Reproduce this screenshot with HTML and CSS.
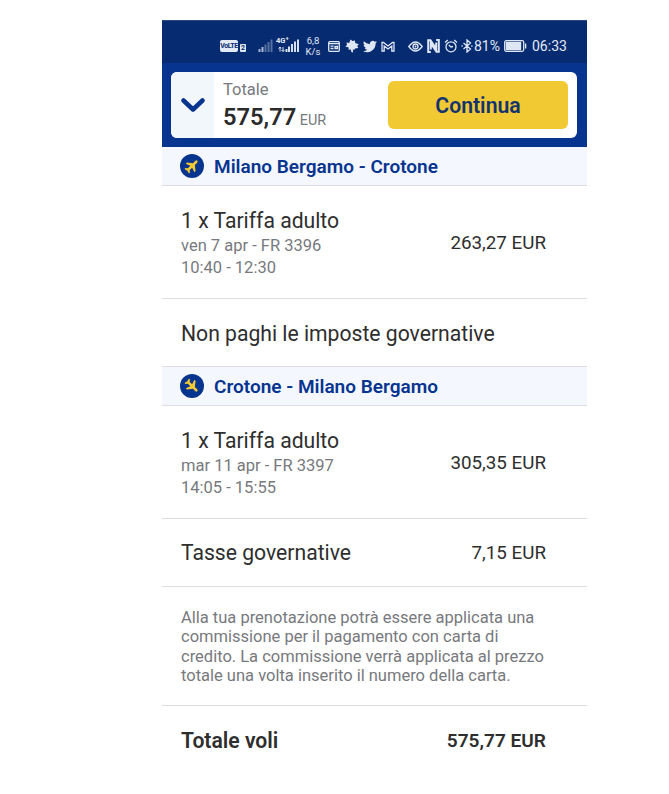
FILE: index.html
```html
<!DOCTYPE html>
<html lang="it">
<head>
<meta charset="utf-8">
<title>Riepilogo prenotazione</title>
<link rel="stylesheet" href="styles.css">
</head>
<body>
<main class="phone">
  <div class="status">
    <span class="volte">VoLTE</span>
    <span class="sim">2</span>
    <svg class="signal" width="15" height="14" viewBox="0 0 15 14"><path class="mid" d="M1.5 10v3M4.5 8v5"/><path class="dim" d="M7.5 5.500v7.500M10.500 3v10M13.500 .5v12.500"/></svg>
    <span class="network">
      <small>4G<sup>+</sup></small>
      <svg width="23" height="14" viewBox="0 0 23 14"><path class="thin" d="M4 12.500V8M2.500 9.500 4 8l1 1.500M7 8v4.500M5.500 11 7 12.500 8.500 11"/><path class="bar" d="M10.500 10v3M13 7.500v5.500M16 5v8M19 2.500v10.500M22 .5v12.500"/></svg>
    </span>
    <span class="speed">6,8<br>K/s</span>
    <svg class="news" width="12" height="11" viewBox="0 0 12 11"><rect x=".7" y=".7" width="10.600" height="9.600" rx="1"/><path d="M1 2.700h10M2.500 5.200h3M2.500 7.500h3M7 5.500h2.500v2H7z"/></svg>
    <svg class="leaf" width="14" height="14" viewBox="0 0 14 14"><path class="fill" d="M5.500.5 7.500 2 10 1.500l.2 2.500 3.600 1.200-1.600 1.800 1.100 2-3.300.5-.5 1.200-1.700-.2.400 3-1.800-.5-.6-2.500-2.300.3.200-2.300L.3 7.500l1.700-1.500L1.500 3.500l2.700.5z"/></svg>
    <svg class="bird" width="14" height="13" viewBox="0 0 24 20"><path class="fill" d="M24 2.400a10 10 0 0 1-2.800.8A5 5 0 0 0 23.300.5a10 10 0 0 1-3.100 1.200A5 5 0 0 0 11.800 6.200 14 14 0 0 1 1.700 1a5 5 0 0 0 1.500 6.600A5 5 0 0 1 1 7a5 5 0 0 0 3.900 4.900 5 5 0 0 1-2.200.1 5 5 0 0 0 4.600 3.400A10 10 0 0 1 0 17.500 14 14 0 0 0 21.500 5z"/></svg>
    <svg class="mail" width="14" height="11" viewBox="0 0 14 11"><path d="M1 10V1.500h1.500L7 5l4.500-3.500H13V10h-2.200V5L7 8 3.200 5v5z"/></svg>
    <svg class="eye" width="15" height="11" viewBox="0 0 15 11"><path d="M.8 5.500Q7.500-3.500 14.200 5.500 7.500 14.500.8 5.500z"/><circle cx="7.500" cy="5.500" r="2.500"/><circle class="fill" cx="7.500" cy="5.500" r="1"/></svg>
    <svg class="nfc" width="13" height="14" viewBox="0 0 13 14"><path d="M3.800 13H1.200V1.200h2.300l5.700 8.500V3.500M9.200 1h2.600v11.800H9.500L3.800 4.300v6.200"/></svg>
    <svg class="alarm" width="14" height="14" viewBox="0 0 14 14"><circle cx="7" cy="7.800" r="5"/><path d="M1 3.500 3.800 1M13 3.500 10.200 1M4.800 6 7 8l2-.5"/></svg>
    <svg class="bluetooth" width="12" height="14" viewBox="0 0 12 14"><path d="m2.500 4 7 6L6 13V1l3.500 3-7 6M.5 7h1.200M10.300 7h1.200"/></svg>
    <span class="percent">81%</span>
    <svg class="battery" width="23" height="12" viewBox="0 0 23 12"><rect x=".7" y=".7" width="19" height="10.600" rx="1.500"/><path class="fill" d="M1.800 1.800h15.400v8.400H1.800zM21 3.500h1.300v5H21z"/></svg>
    <time>06:33</time>
  </div>

  <header class="header">
    <div class="summary">
      <div class="toggle"><svg width="24" height="16" viewBox="0 0 24 16"><path d="m2.500 3.500 9.500 9 9.500-9"/></svg></div>
      <div class="total">
        <span class="total-label">Totale</span>
        <span class="total-value"><b>575,77</b> <span>EUR</span></span>
      </div>
      <button class="continue">Continua</button>
    </div>
  </header>

  <h2 class="route">
    <svg class="plane" width="24" height="24" viewBox="0 0 24 24"><circle cx="12" cy="12" r="12"/><path transform="rotate(45 12 12)" d="M12 4.500c.8 0 1.300.8 1.300 1.800v3l4.800 3.700v1.800l-4.800-1.700v3.400l1.900 1.600v1.400l-3.200-.8-3.200.8v-1.400l1.900-1.600v-3.400l-4.800 1.700V13l4.800-3.700v-3c0-1 .5-1.800 1.300-1.800z"/></svg>
    Milano Bergamo - Crotone
  </h2>
  <section class="row fare">
    <div><p class="name">1 x Tariffa adulto</p><p class="detail">ven 7 apr - FR 3396</p><p class="detail">10:40 - 12:30</p></div>
    <span class="price">263,27 EUR</span>
  </section>
  <section class="row notax"><p class="name">Non paghi le imposte governative</p></section>

  <h2 class="route">
    <svg class="plane" width="24" height="24" viewBox="0 0 24 24"><circle cx="12" cy="12" r="12"/><path transform="rotate(135 12 12)" d="M12 4.500c.8 0 1.300.8 1.300 1.800v3l4.800 3.700v1.800l-4.800-1.700v3.400l1.900 1.600v1.400l-3.200-.8-3.200.8v-1.400l1.900-1.600v-3.400l-4.800 1.700V13l4.800-3.700v-3c0-1 .5-1.800 1.300-1.800z"/></svg>
    Crotone - Milano Bergamo
  </h2>
  <section class="row fare">
    <div><p class="name">1 x Tariffa adulto</p><p class="detail">mar 11 apr - FR 3397</p><p class="detail">14:05 - 15:55</p></div>
    <span class="price">305,35 EUR</span>
  </section>
  <section class="row tax"><p class="name">Tasse governative</p><span class="price">7,15 EUR</span></section>
  <p class="notice">Alla tua prenotazione potrà essere applicata una<br>commissione per il pagamento con carta di<br>credito. La commissione verrà applicata al prezzo<br>totale una volta inserito il numero della carta.</p>
  <section class="row final"><p class="name">Totale voli</p><span class="price">575,77 EUR</span></section>
</main>
</body>
</html>
```
FILE: styles.css
```css
* { box-sizing: border-box; }
body { margin: 0; background: #fff; font-family: Roboto, sans-serif; color: #2e2e2e; }
p, h2 { margin: 0; }
svg { display: block; flex: none; }
.phone { width: 425px; margin: 20px 0 0 162px; white-space: nowrap; }

.status { height: 43px; padding: 8px 0 0 58px; background: #062b70; color: #e3eaf7; display: flex; align-items: center; font-size: 14px; border-top: 1px solid #2a4a84; }
.status svg { fill: none; stroke: #dfe7f5; stroke-width: 1.3; }
.status svg .fill { fill: #dfe7f5; stroke: none; }
.status .mid { stroke: #a9b8d5; stroke-width: 2; }
.status .dim { stroke: #54719f; stroke-width: 2; }
.status .bar { stroke-width: 1.900; }
.status .thin { stroke-width: 1; }
.volte { width: 18px; height: 12px; border-radius: 2px; background: #e3eaf7; color: #062b70; font-size: 7px; line-height: 12px; font-weight: 700; text-align: center; letter-spacing: -.4px; }
.sim { width: 6px; height: 8px; margin: 3px 0 0 2px; border-radius: 1px; background: #dfe7f5; color: #062b70; font-size: 7px; line-height: 8px; font-weight: 700; text-align: center; }
.signal { margin-left: 12px; }
.network { position: relative; margin-left: 3px; }
.network small { position: absolute; left: 0; top: -2px; font-size: 7.500px; line-height: 8px; font-weight: 700; }
.network sup { font-size: 6px; line-height: 0; }
.speed { margin-left: 6px; width: 16px; font-size: 9.500px; line-height: 11px; text-align: center; }
.news { margin-left: 7px; }
.leaf { margin-left: 5px; }
.bird { margin-left: 4px; }
.mail { margin-left: 4px; }
.eye { margin-left: 13px; }
.nfc { margin-left: 4px; }
.status .nfc { stroke-width: 2; }
.alarm { margin-left: 4px; }
.bluetooth { margin-left: 3px; }
.percent { margin-left: 1px; width: 26px; font-size: 14px; }
.battery { margin-left: 4px; }
.status time { margin-left: 5px; font-size: 14px; }

.header { height: 84px; padding: 9px 10px 9px 9px; background: #07348f; }
.summary { height: 66px; border-radius: 6px; overflow: hidden; background: #fff; display: flex; align-items: center; }
.toggle { width: 43px; height: 100%; background: #f2f7fc; display: flex; align-items: center; justify-content: center; }
.toggle svg { fill: none; stroke: #07348f; stroke-width: 4.500; stroke-linecap: round; stroke-linejoin: round; }
.total { width: 174px; padding: 6px 0 0 9px; display: flex; flex-direction: column; }
.total-label { font-size: 16.500px; line-height: 22px; color: #77797e; }
.total-value { font-size: 14.400px; line-height: 32px; color: #77797e; }
.total-value b { font-size: 23.700px; font-weight: 600; color: #2b2b2b; }
.continue { width: 180px; height: 48px; padding: 1px 0 0; border: 0; border-radius: 6px; background: #f1c933; color: #13336f; font: 600 21.200px Roboto, sans-serif; }

.route { height: 39px; padding-left: 18px; display: flex; align-items: center; gap: 10px; background: #f4f7fe; border-bottom: 1px solid #dcdde0; color: #07348f; font-size: 19px; font-weight: 600; }
.plane { fill: #07348f; }
.plane path { fill: #f1c933; }
.row { padding: 0 41px 0 19px; display: flex; align-items: center; justify-content: space-between; border-bottom: 1px solid #dedede; }
.fare { height: 113px; padding-top: 2px; }
.notax { height: 68px; padding-top: 2px; }
.tax { height: 68px; }
.name { font-size: 21.150px; line-height: 27px; }
.detail { font-size: 16.500px; line-height: 22.500px; color: #77797e; }
.detail:nth-child(2) { margin-top: 1px; }
.price { font-size: 18.800px; }
.notice { height: 119px; padding: 21px 0 0 19px; border-bottom: 1px solid #dedede; color: #77797e; font-size: 16.500px; line-height: 19.300px; }
.final { height: 69px; border: 0; font-weight: 600; }
.final .price { font-size: 19.100px; }
```
